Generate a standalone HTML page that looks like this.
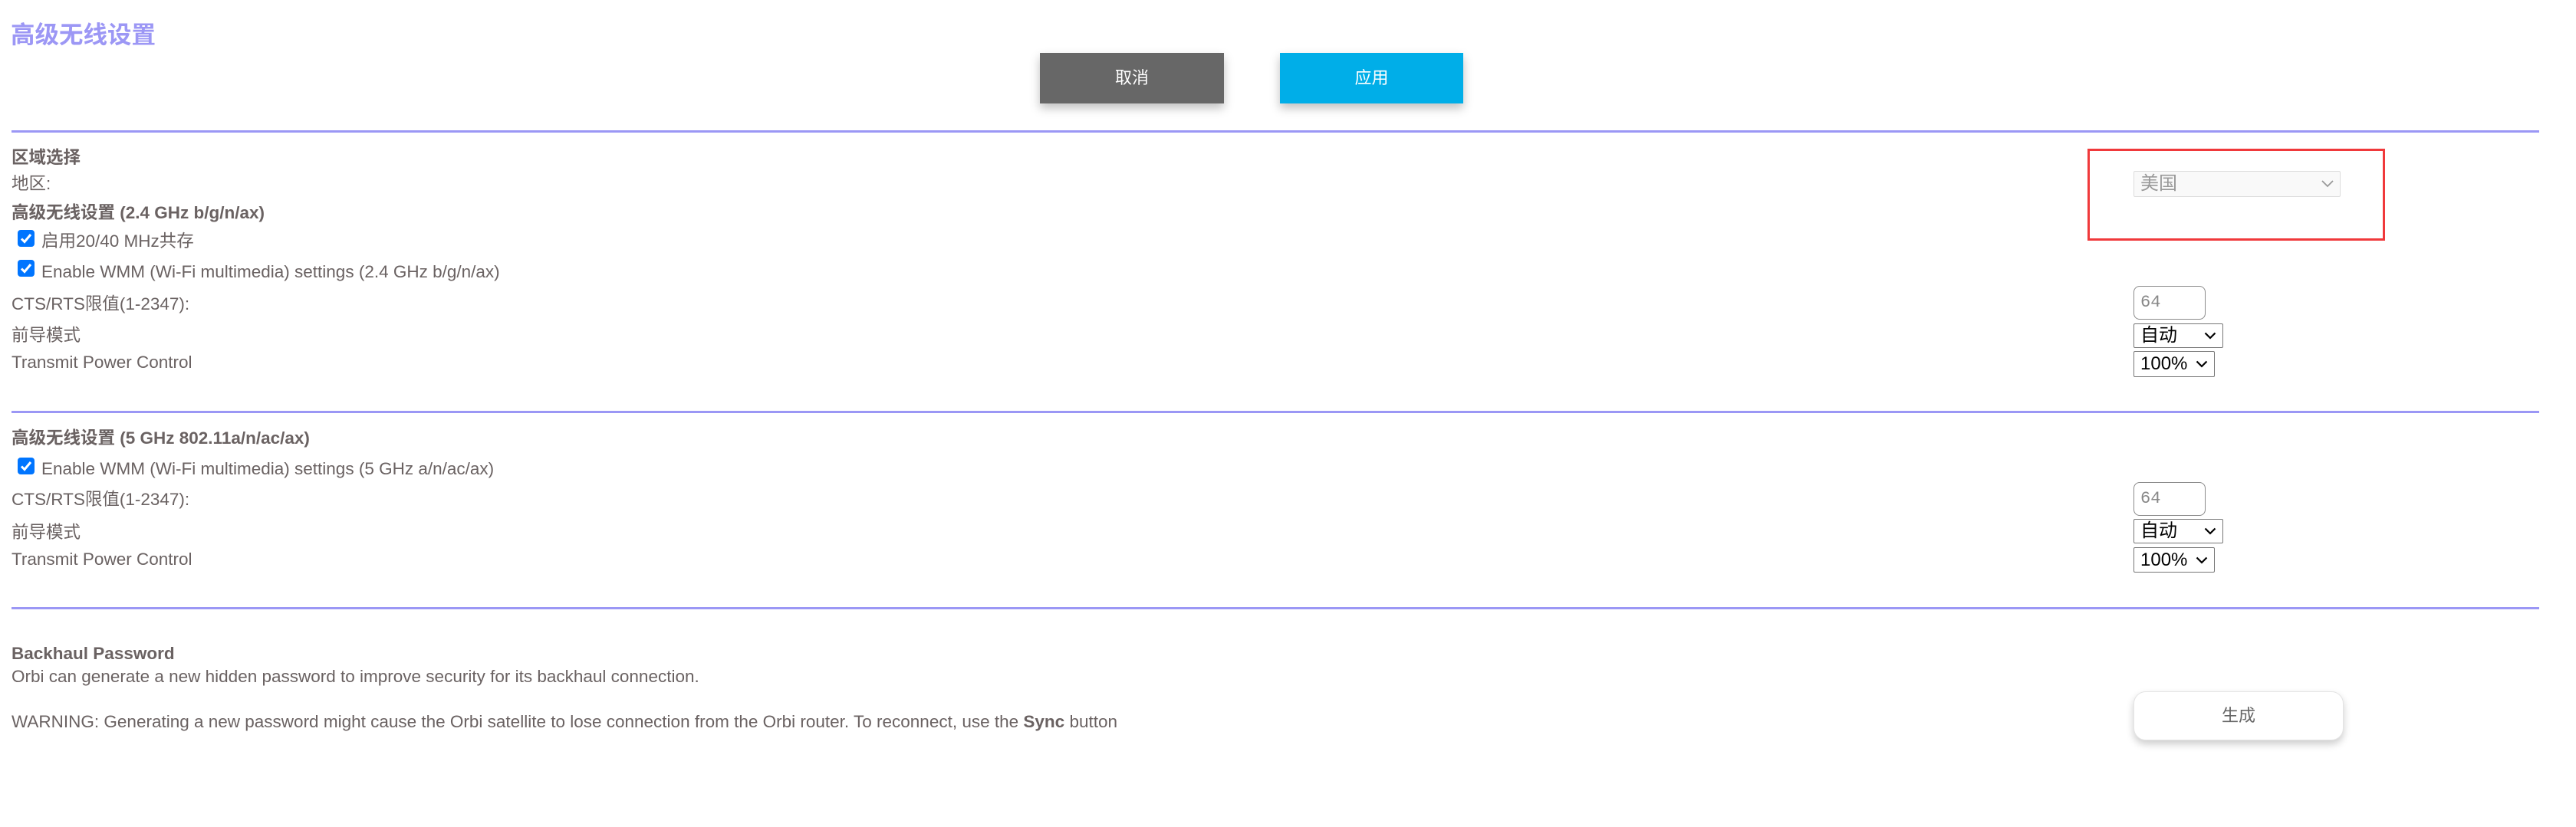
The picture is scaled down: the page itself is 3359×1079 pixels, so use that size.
<!DOCTYPE html>
<html><head><meta charset="utf-8"><style>
html,body{margin:0;padding:0;background:#fff;width:3359px;height:1079px;overflow:hidden;position:relative}
body{font-family:"Liberation Sans","Noto Sans CJK SC",sans-serif;color:#6a6262;font-size:22.5px}
.t{position:absolute;left:15px;line-height:26px;white-space:nowrap}
.b{font-weight:bold}
.hr{position:absolute;left:15px;width:3296px;height:3px;background:#9b97f5}
.cb{position:absolute;left:23px;width:22px;height:22px;background:#1a73e8;border-radius:4px;background:#0075ff}
.cb svg{position:absolute;left:0;top:0}
.btn{position:absolute;height:66px;top:69px;color:#fff;font-size:22px;text-align:center;line-height:66px;box-shadow:0 6px 12px rgba(0,0,0,.25)}
.sel{position:absolute;left:2782px;border:1.5px solid #767676;box-sizing:border-box;background:#fff;color:#000;font-size:24px;border-radius:2px}
.sel span{position:absolute;left:8px;top:50%;transform:translateY(-50%);line-height:30px}
.sel svg{position:absolute;top:50%;transform:translateY(-50%)}
.inp{position:absolute;left:2782px;width:94px;height:44px;border:1.5px solid #8a8a8a;box-sizing:border-box;border-radius:8px;font-family:"Liberation Mono",monospace;color:#888;font-size:22px;line-height:41px;padding-left:8px}
</style></head><body>
<div class="t b" style="top:27px;font-size:31.5px;line-height:36px;color:#9c97f5;left:14px">高级无线设置</div>
<div class="btn" style="left:1356px;width:240px;background:#676767">取消</div>
<div class="btn" style="left:1669px;width:239px;background:#00aee8">应用</div>

<div class="hr" style="top:170px"></div>
<div class="t b" style="top:193px">区域选择</div>
<div class="t" style="top:227px">地区:</div>
<div class="t b" style="top:265px">高级无线设置 (2.4 GHz b/g/n/ax)</div>
<div class="cb" style="top:300px"><svg width="22" height="22" viewBox="0 0 22 22"><path d="M5 11.5 L9 15.5 L17 6" stroke="#fff" stroke-width="3" fill="none"/></svg></div>
<div class="t" style="top:302px;left:54px">启用20/40 MHz共存</div>
<div class="cb" style="top:339px"><svg width="22" height="22" viewBox="0 0 22 22"><path d="M5 11.5 L9 15.5 L17 6" stroke="#fff" stroke-width="3" fill="none"/></svg></div>
<div class="t" style="top:342px;left:54px">Enable WMM (Wi-Fi multimedia) settings (2.4 GHz b/g/n/ax)</div>
<div class="t" style="top:384px">CTS/RTS限值(1-2347):</div>
<div class="t" style="top:425px">前导模式</div>
<div class="t" style="top:460px">Transmit Power Control</div>

<div style="position:absolute;left:2722px;top:194px;width:388px;height:120px;border:3px solid #f0393b;box-sizing:border-box"></div>
<div style="position:absolute;left:2782px;top:223px;width:270px;height:34px;border:1.5px solid #ddd;box-sizing:border-box;background:#f9f9f9;border-radius:2px">
<span style="position:absolute;left:8px;top:1px;color:#999;font-size:24px;line-height:30px">美国</span>
<svg style="position:absolute;left:244px;top:11px" width="16" height="10" viewBox="0 0 16 10"><path d="M1 1 L8 8 L15 1" stroke="#999" stroke-width="1.8" fill="none"/></svg></div>
<div class="inp" style="top:373px">64</div>
<div class="sel" style="top:422px;width:117px;height:32px"><span>自动</span><svg style="left:91px" width="16" height="10" viewBox="0 0 16 10"><path d="M1.5 1.5 L8 8 L14.5 1.5" stroke="#000" stroke-width="2.2" fill="none"/></svg></div>
<div class="sel" style="top:458px;width:106px;height:34px"><span>100%</span><svg style="left:80px" width="16" height="10" viewBox="0 0 16 10"><path d="M1.5 1.5 L8 8 L14.5 1.5" stroke="#000" stroke-width="2.2" fill="none"/></svg></div>

<div class="hr" style="top:536px"></div>
<div class="t b" style="top:559px">高级无线设置 (5 GHz 802.11a/n/ac/ax)</div>
<div class="cb" style="top:597px"><svg width="22" height="22" viewBox="0 0 22 22"><path d="M5 11.5 L9 15.5 L17 6" stroke="#fff" stroke-width="3" fill="none"/></svg></div>
<div class="t" style="top:599px;left:54px">Enable WMM (Wi-Fi multimedia) settings (5 GHz a/n/ac/ax)</div>
<div class="t" style="top:639px">CTS/RTS限值(1-2347):</div>
<div class="t" style="top:682px">前导模式</div>
<div class="t" style="top:717px">Transmit Power Control</div>
<div class="inp" style="top:629px">64</div>
<div class="sel" style="top:677px;width:117px;height:32px"><span>自动</span><svg style="left:91px" width="16" height="10" viewBox="0 0 16 10"><path d="M1.5 1.5 L8 8 L14.5 1.5" stroke="#000" stroke-width="2.2" fill="none"/></svg></div>
<div class="sel" style="top:714px;width:106px;height:33px"><span>100%</span><svg style="left:80px" width="16" height="10" viewBox="0 0 16 10"><path d="M1.5 1.5 L8 8 L14.5 1.5" stroke="#000" stroke-width="2.2" fill="none"/></svg></div>

<div class="hr" style="top:792px"></div>
<div class="t b" style="top:840px">Backhaul Password</div>
<div class="t" style="top:870px">Orbi can generate a new hidden password to improve security for its backhaul connection.</div>
<div class="t" style="top:929px">WARNING: Generating a new password might cause the Orbi satellite to lose connection from the Orbi router. To reconnect, use the <b>Sync</b> button</div>
<div style="position:absolute;left:2782px;top:902px;width:274px;height:64px;border-radius:16px;background:#fff;border:1px solid #e4e4e4;box-sizing:border-box;box-shadow:0 5px 10px rgba(0,0,0,.2);text-align:center;line-height:62px;font-size:22px;color:#666">生成</div>
</body></html>
